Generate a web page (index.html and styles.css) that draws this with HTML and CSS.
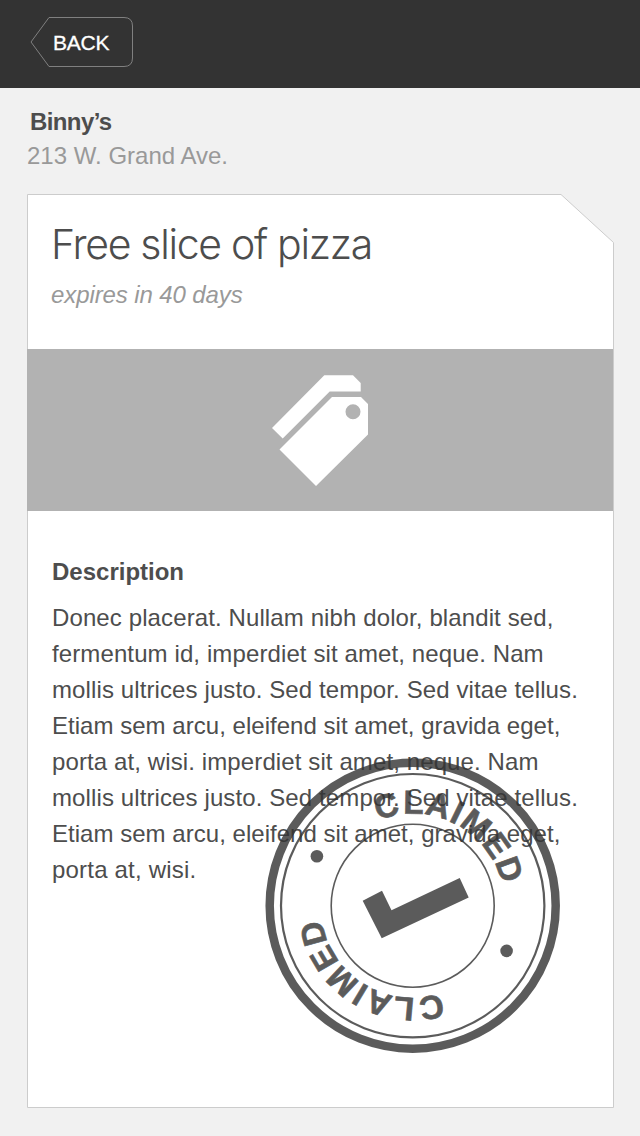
FILE: index.html
```html
<!DOCTYPE html>
<html lang="en">
<head>
<meta charset="utf-8">
<title>Coupon</title>
<link rel="stylesheet" href="styles.css">
</head>
<body>
<header class="topbar">
  <a class="back">
    <svg class="back-shape" width="104" height="52" viewBox="0 0 104 52"><path d="M19 1.500H94Q102.500 1.500 102.500 10V42Q102.500 50.500 94 50.500H19L1 26Z"/></svg>
    <span class="back-label">BACK</span>
  </a>
</header>
<main class="page">
  <h2 class="place">Binny’s</h2>
  <p class="address">213 W. Grand Ave.</p>
  <section class="card">
    <svg class="card-shape" width="587" height="914" viewBox="0 0 587 914"><path d="M.5 .5H534L586.500 48.500V913.500H.5Z"/></svg>
    <div class="card-head">
      <h1 class="title">Free slice of pizza</h1>
      <p class="expires">expires in 40 days</p>
    </div>
    <div class="band">
      <svg width="98" height="112" viewBox="271 374 98 112" fill="#fff" overflow="visible"><path d="M324.300 375.300H353L360.700 383V391.500H329.700L282.700 438.500L272 428Z"/><path fill-rule="evenodd" d="M332 397H361L368 404V434.500L316 486L279.500 449.500ZM345.500 411.700a7.500 7.500 0 1 0 15 0a7.500 7.500 0 1 0-15 0Z"/></svg>
    </div>
    <div class="body">
      <h3 class="subhead">Description</h3>
      <p class="text">
        <span class="line">Donec placerat. Nullam nibh dolor, blandit sed,</span>
        <span class="line">fermentum id, imperdiet sit amet, neque. Nam</span>
        <span class="line">mollis ultrices justo. Sed tempor. Sed vitae tellus.</span>
        <span class="line line-tight">Etiam sem arcu, eleifend sit amet, gravida eget,</span>
        <span class="line">porta at, wisi. imperdiet sit amet, neque. Nam</span>
        <span class="line">mollis ultrices justo. Sed tempor. Sed vitae tellus.</span>
        <span class="line line-tight">Etiam sem arcu, eleifend sit amet, gravida eget,</span>
        <span class="line line-last">porta at, wisi.</span>
      </p>
    </div>
    <svg class="stamp" width="296" height="296" viewBox="-147.700 -147.700 296 296">
      <defs><path id="arc" d="M0-92A92 92 0 0 1 0 92A92 92 0 0 1 0-92"/></defs>
      <g fill="none" stroke="#333">
        <circle r="143" stroke-width="8.500"/>
        <circle r="131.700" stroke-width="2.200"/>
        <circle r="81.500" stroke-width="1.600"/>
      </g>
      <g fill="#333">
        <circle cx="-95.800" cy="-49.500" r="6.300"/>
        <circle cx="93.900" cy="45.200" r="6.300"/>
        <path d="M-50-5L-30.700-15L-21.200 4.500L47-27.700L56-8.200L-31 32.500Z"/>
        <text class="stamp-text" dx="0 1.200 -1" transform="rotate(-22.300)"><textPath href="#arc">CLAIMED</textPath></text>
        <text class="stamp-text" dx="0 1.200 0" transform="rotate(162)"><textPath href="#arc">CLAIMED</textPath></text>
      </g>
    </svg>
  </section>
</main>
</body>
</html>
```
FILE: styles.css
```css
* { box-sizing: border-box; margin: 0; padding: 0; }
body {
  width: 640px;
  height: 1136px;
  overflow: hidden;
  background: #f1f1f1;
  color: #4d4d4d;
  font-family: "Liberation Sans", Arial, sans-serif;
  font-size: 24px;
}
.topbar { height: 88px; padding: 16px 30px; background: #333; }
.back { display: grid; width: 104px; height: 52px; align-items: center; }
.back-shape, .back-label { grid-area: 1 / 1; }
.back-shape { fill: none; stroke: #808080; stroke-width: 1; }
.back-label { padding: 2px 0 0 23px; color: #fff; font-size: 21px; line-height: 24px; letter-spacing: -.2px; -webkit-text-stroke: .3px #fff; }
.page { padding: 17px 26px 28px 27px; }
.place { padding-left: 3px; font-size: 24px; line-height: 34px; letter-spacing: -.6px; }
.address { color: #999; line-height: 34px; }
.card { position: relative; height: 914px; margin-top: 21px; }
.card-shape { position: absolute; inset: 0; fill: #fff; stroke: #ccc; }
.card-head, .band, .body { position: relative; }
.card-head { height: 155px; padding: 25px 24px 0; }
.title { font: 300 41px/50px Inter, "Liberation Sans", sans-serif; letter-spacing: -1.300px; white-space: nowrap; }
.expires { margin-top: 9px; color: #999; font-style: italic; line-height: 34px; letter-spacing: -.1px; }
.band { display: flex; height: 162px; margin-right: 1px; align-items: center; justify-content: center; background: #b2b2b2; }
.body { padding: 44px 0 0 25px; }
.subhead { font-size: 24px; line-height: 34px; }
.text { margin-top: 11px; line-height: 36px; white-space: nowrap; }
.line { display: block; letter-spacing: .11px; }
.line-tight { letter-spacing: .03px; }
.line-last { letter-spacing: .2px; }
.stamp { position: absolute; left: 238px; top: 564px; opacity: .8; }
.stamp-text { font-size: 33px; font-weight: bold; letter-spacing: 1.400px; stroke: #333; stroke-width: .7px; }
```
